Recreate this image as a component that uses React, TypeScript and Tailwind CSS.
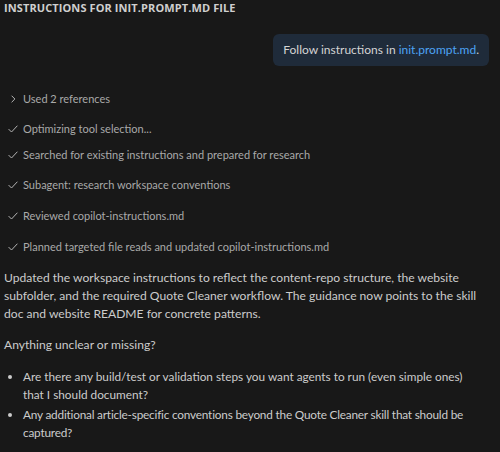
import React from "react";

const steps = [
  { text: "Searched for existing instructions and prepared for research", gap: "mt-[0px]" },
  { text: "Subagent: research workspace conventions", gap: "mt-[4px]" },
  { text: "Reviewed copilot-instructions.md", gap: "mt-[5px]" },
  { text: "Planned targeted file reads and updated copilot-instructions.md", gap: "mt-[5px]" },
];

function Check() {
  return (
    <svg width="12" height="12" viewBox="0 0 16 16" fill="none" className="shrink-0">
      <path d="M2.5 8.5l3.5 3.5 7.5-8" stroke="#b8b8b8" strokeWidth="1.3" strokeLinecap="round" strokeLinejoin="round" />
    </svg>
  );
}

function Chevron() {
  return (
    <svg width="12" height="12" viewBox="0 0 16 16" fill="none" className="shrink-0">
      <path d="M6.5 4l4 4-4 4" stroke="#b8b8b8" strokeWidth="1.3" strokeLinecap="round" strokeLinejoin="round" />
    </svg>
  );
}

export default function App() {
  return (
    <div
      className="w-[500px] h-[452px] overflow-hidden bg-[#181818] text-[#cccccc] px-1"
      style={{ fontFamily: 'Lato, "Noto Sans", sans-serif' }}
    >
      <div
        className="pt-[1px] text-[11px] font-bold tracking-[0.1px] text-[#cfcfcf] leading-[14px]"
        style={{ fontFamily: '"Open Sans", sans-serif' }}
      >
        INSTRUCTIONS FOR INIT.PROMPT.MD FILE
      </div>

      <div className="flex justify-end mt-[19px] pr-[7px]">
        <div className="rounded-[6px] bg-[#1f2b3a] px-[10px] h-[32px] flex items-center text-[12px] text-[#d4d4d4]">
          Follow instructions in&nbsp;<span className="text-[#4da3f5]">init.prompt.md</span>.
        </div>
      </div>

      <div className="mt-[20px] flex flex-col text-[11px] text-[#a9a9a9]">
        <div className="flex items-center gap-[4px] pl-[3px] h-[26px]">
          <Chevron />
          <span>Used 2 references</span>
        </div>
        <div className="flex items-center gap-[4px] pl-[3px] h-[26px] mt-[4px]">
          <Check />
          <span>Optimizing tool selection...</span>
        </div>
        {steps.map((s) => (
          <div key={s.text} className={`flex items-center gap-[4px] pl-[3px] h-[26px] ${s.gap}`}>
            <Check />
            <span>{s.text}</span>
          </div>
        ))}
      </div>

      <p className="mt-[9px] text-[12.1px] leading-[18px] text-[#cccccc] pr-[12px]">
        Updated the workspace instructions to reflect the content-repo structure, the website subfolder, and the
        required Quote Cleaner workflow. The guidance now points to the skill doc and website README for concrete
        patterns.
      </p>

      <p className="mt-[13px] text-[12.1px] leading-[18px]">Anything unclear or missing?</p>

      <ul className="mt-[14px] w-[481px] text-[11.8px] leading-[18px] list-disc pl-[19px] flex flex-col gap-[2px]">
        <li>Are there any build/test or validation steps you want agents to run (even simple ones) that I should document?</li>
        <li className="tracking-[-0.2px]">Any additional article-specific conventions beyond the Quote Cleaner skill that should be captured?</li>
      </ul>
    </div>
  );
}
